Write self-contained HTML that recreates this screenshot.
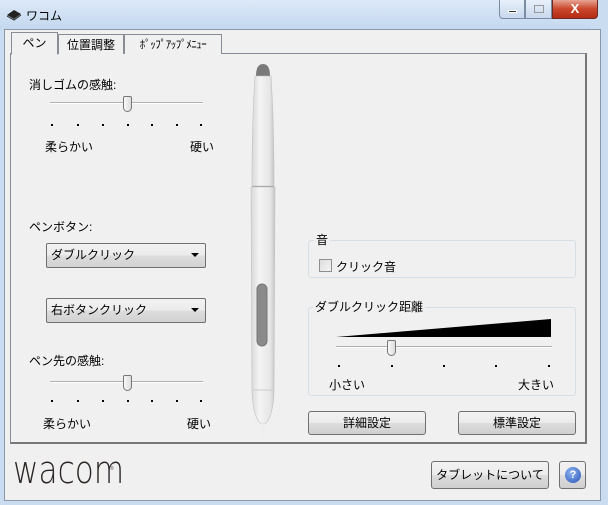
<!DOCTYPE html>
<html><head><meta charset="utf-8"><style>
*{margin:0;padding:0;box-sizing:border-box}
body{width:608px;height:505px;overflow:hidden;background:#c9dcf0;font-family:"Liberation Sans","Noto Sans CJK JP",sans-serif;font-size:12px;color:#000;position:relative}
.a{position:absolute}
.title{left:0;top:0;width:608px;height:30px;background:linear-gradient(#dce9f7,#c3d7ee)}
.client{left:4px;top:29px;width:597px;height:472px;background:#f0f0f0;border:1px solid #8a98a8}
.panel{left:10px;top:53px;width:577px;height:391px;border:1px solid #898c95;border-right:2px solid #777;border-bottom:2px solid #777;background:#f0f0f0}
.tab{top:34px;height:20px;border:1px solid #898c95;border-bottom:none;background:#f0f0f0;text-align:center;line-height:20px;font-size:12px}
.btn{border:1px solid #707070;border-radius:3px;background:linear-gradient(#f2f2f2 0%,#ebebeb 50%,#dddddd 51%,#cfcfcf 100%);text-align:center;font-size:12px}
.dd{border:1px solid #707070;border-radius:2px;background:linear-gradient(#f2f2f2,#ebebeb 50%,#dddddd 51%,#d2d2d2);font-size:12px;padding-left:4px;line-height:22px}
.dd:after{content:"";position:absolute;right:6px;top:9px;border-left:4px solid transparent;border-right:4px solid transparent;border-top:4px solid #000}
.track{height:2px;border-top:1px solid #b0b0b0;border-bottom:1px solid #fff;background:#e0e0e0}
.thumb{width:9px;height:16px;border:1px solid #777;border-radius:2px 2px 5px 5px;background:linear-gradient(90deg,#f8f8f8,#ddd)}
.dot{width:2px;height:2px;background:#000}
.grp{border:1px solid #d5dfe5;border-radius:3px}
.lbl{background:#f0f0f0;padding:0 2px}
</style></head><body>
<div class="a title"></div>
<div class="a" style="left:590px;top:0;width:18px;height:505px;background:#c9dcf0"></div>
<svg class="a" style="left:6px;top:9px" width="16" height="12"><path d="M1 6 L8 1 L15 5 L8 10 Z" fill="#222"/><path d="M1 7 L8 11 L15 6" stroke="#222" fill="none"/></svg>
<div class="a" style="left:26px;top:7px;font-size:12px">ワコム</div>
<div class="a" style="left:499px;top:0;width:26px;height:19px;border:1px solid #7a8ca2;border-top:none;border-radius:0 0 0 4px;background:linear-gradient(#e8f0fa,#c8d8ec)"><div class="a" style="left:8px;top:10px;width:9px;height:3px;background:#333;border:1px solid #fff"></div></div>
<div class="a" style="left:525px;top:0;width:27px;height:19px;border:1px solid #7a8ca2;border-top:none;background:linear-gradient(#e8f0fa,#c8d8ec)"><div class="a" style="left:8px;top:5px;width:10px;height:8px;border:1px solid #999"></div></div>
<div class="a" style="left:552px;top:0;width:46px;height:19px;border:1px solid #6d2a20;border-top:none;border-radius:0 0 4px 0;background:linear-gradient(#e8a493,#c9462c 50%,#b42b14);color:#fff;text-align:center;font-weight:bold;font-size:13px;line-height:17px">X</div>
<div class="a client"></div>
<div class="a panel"></div>
<div class="a tab" style="left:11px;top:32px;width:47px;height:23px;border-bottom:1px solid #f0f0f0">ペン</div>
<div class="a tab" style="left:58px;width:66px">位置調整</div>
<div class="a tab" style="left:124px;width:98px;font-size:11px;letter-spacing:-0.5px">ﾎﾟｯﾌﾟｱｯﾌﾟﾒﾆｭｰ</div>

<div class="a" style="left:29px;top:76px">消しゴムの感触:</div>
<div class="a track" style="left:50px;top:102px;width:153px"></div>
<div class="a thumb" style="left:123px;top:96px"></div>
<div class="a dot" style="left:51px;top:124px"></div><div class="a dot" style="left:77px;top:124px"></div><div class="a dot" style="left:102px;top:124px"></div><div class="a dot" style="left:127px;top:124px"></div><div class="a dot" style="left:151px;top:124px"></div><div class="a dot" style="left:176px;top:124px"></div><div class="a dot" style="left:200px;top:124px"></div>
<div class="a" style="left:45px;top:138px">柔らかい</div>
<div class="a" style="left:190px;top:138px">硬い</div>

<div class="a" style="left:29px;top:218px">ペンボタン:</div>
<div class="a dd" style="left:46px;top:243px;width:160px;height:25px">ダブルクリック</div>
<div class="a dd" style="left:46px;top:298px;width:160px;height:25px">右ボタンクリック</div>

<div class="a" style="left:29px;top:352px">ペン先の感触:</div>
<div class="a track" style="left:50px;top:381px;width:153px"></div>
<div class="a thumb" style="left:123px;top:375px"></div>
<div class="a dot" style="left:51px;top:400px"></div><div class="a dot" style="left:77px;top:400px"></div><div class="a dot" style="left:102px;top:400px"></div><div class="a dot" style="left:127px;top:400px"></div><div class="a dot" style="left:151px;top:400px"></div><div class="a dot" style="left:176px;top:400px"></div><div class="a dot" style="left:200px;top:400px"></div>
<div class="a" style="left:43px;top:415px">柔らかい</div>
<div class="a" style="left:187px;top:415px">硬い</div>

<svg class="a" style="left:245px;top:62px" width="36" height="375">
<defs><linearGradient id="g" x1="0" x2="1"><stop offset="0" stop-color="#d8d8d8"/><stop offset=".35" stop-color="#f4f4f4"/><stop offset=".8" stop-color="#e6e6e6"/><stop offset="1" stop-color="#c4c4c4"/></linearGradient></defs>
<path d="M11 14 Q11 2 18 2 Q25 2 25 14 Z" fill="#7a7a7a"/>
<path d="M10 14 L26 14 Q29 60 29 120 L29 124 L7 124 L7 120 Q7 60 10 14 Z" fill="url(#g)" stroke="#c0c0c0" stroke-width=".6"/>
<path d="M6 125 L30 125 L29 330 Q28 355 20 362 L16 362 Q8 355 7 330 Z" fill="url(#g)" stroke="#c0c0c0" stroke-width=".6"/>
<line x1="7" y1="124.5" x2="29" y2="124.5" stroke="#aaa"/>
<line x1="8" y1="328" x2="28" y2="328" stroke="#ccc"/>
<rect x="12" y="222" width="10" height="62" rx="5" fill="#8a8a8a" stroke="#777"/>
<path d="M16 362 L20 362 L19 372 L17 372 Z" fill="#eee"/>
</svg>

<div class="a grp" style="left:308px;top:240px;width:268px;height:38px"></div>
<div class="a lbl" style="left:314px;top:231px">音</div>
<div class="a" style="left:319px;top:259px;width:13px;height:13px;border:1px solid #8f8f8f;background:linear-gradient(135deg,#ddd,#f4f4f4)"></div>
<div class="a" style="left:336px;top:258px">クリック音</div>

<div class="a grp" style="left:308px;top:307px;width:268px;height:89px"></div>
<div class="a lbl" style="left:313px;top:298px">ダブルクリック距離</div>
<svg class="a" style="left:336px;top:319px" width="216" height="19"><path d="M0 18 L215 0 L215 18 Z" fill="#000"/></svg>
<div class="a track" style="left:336px;top:346px;width:216px"></div>
<div class="a thumb" style="left:387px;top:340px"></div>
<div class="a dot" style="left:338px;top:365px"></div><div class="a dot" style="left:391px;top:365px"></div><div class="a dot" style="left:443px;top:365px"></div><div class="a dot" style="left:495px;top:365px"></div><div class="a dot" style="left:548px;top:365px"></div>
<div class="a" style="left:329px;top:376px">小さい</div>
<div class="a" style="left:518px;top:376px">大きい</div>

<div class="a btn" style="left:308px;top:411px;width:118px;height:24px;line-height:22px">詳細設定</div>
<div class="a btn" style="left:458px;top:411px;width:118px;height:24px;line-height:22px">標準設定</div>

<div class="a" style="left:13px;top:448px;font-size:38px;color:#2b2626;font-family:'DejaVu Sans',sans-serif;transform:scaleX(0.82);transform-origin:0 0;line-height:44px;font-weight:300">wacom</div>
<div class="a" style="left:110px;top:466px;font-size:5px;color:#555">®</div>
<div class="a btn" style="left:431px;top:461px;width:118px;height:28px;line-height:26px">タブレットについて</div>
<div class="a btn" style="left:559px;top:461px;width:27px;height:28px"><div class="a" style="left:5px;top:5px;width:16px;height:16px;border-radius:50%;background:radial-gradient(circle at 40% 35%,#8fb4f0,#2552b8);color:#fff;font-weight:bold;font-size:11px;line-height:16px;text-align:center">?</div></div>
</body></html>
